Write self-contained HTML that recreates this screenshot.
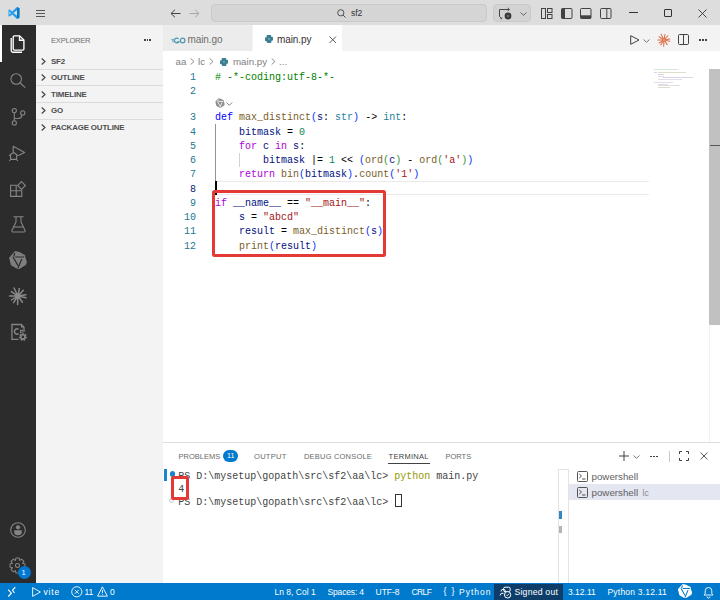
<!DOCTYPE html>
<html><head><meta charset="utf-8">
<style>
*{box-sizing:border-box;margin:0;padding:0}
html,body{width:720px;height:600px;overflow:hidden;background:#fff;font-family:"Liberation Sans",sans-serif}
.a{position:absolute}
.t{position:absolute;white-space:pre;line-height:1}
svg{position:absolute;overflow:visible}
.mono{font-family:"Liberation Mono",monospace}
/* code colours */
.cm{color:#008000}.kw{color:#0000ff}.ct{color:#af00db}.fn{color:#795e26}.pr{color:#001080}
.ty{color:#267f99}.nu{color:#098658}.st{color:#a31515}.op{color:#000}.b1{color:#0431fa}.b2{color:#319331}.b3{color:#7b3814}
</style></head><body>

<!-- TITLE BAR -->
<div class="a" id="titlebar" style="left:0;top:0;width:720px;height:25px;background:#dddddd"></div>
<!-- vscode logo -->
<svg style="left:8px;top:7px" width="12" height="12" viewBox="0 0 100 100">
 <path d="M96 11 L75 1 L35 38 L12 20 L4 23 V77 L12 80 L35 62 L75 99 L96 89 Z M75 28 V72 L45 50 Z M12 35 L25 50 L12 65 Z" fill="#1f9cf0"/>
 <path d="M75 1 L96 11 V89 L75 99 Z" fill="#0065a9" opacity="0.6"/>
</svg>
<!-- hamburger -->
<div class="a" style="left:36px;top:10px;width:9px;height:1.2px;background:#555"></div>
<div class="a" style="left:36px;top:13px;width:9px;height:1.2px;background:#555"></div>
<div class="a" style="left:36px;top:16px;width:9px;height:1.2px;background:#555"></div>
<!-- back / forward -->
<svg style="left:170px;top:9px" width="11" height="9" viewBox="0 0 11 9"><path d="M10.5 4.5H1M5 0.7L1 4.5L5 8.3" fill="none" stroke="#424242" stroke-width="1"/></svg>
<svg style="left:189px;top:9px" width="11" height="9" viewBox="0 0 11 9"><path d="M0.5 4.5H10M6 0.7L10 4.5L6 8.3" fill="none" stroke="#a8a8a8" stroke-width="1"/></svg>
<!-- command center -->
<div class="a" style="left:210.5px;top:4px;width:276px;height:18px;background:#d5d5d5;border:1px solid #c9c9c9;border-radius:4px"></div>
<svg style="left:337px;top:9px" width="9" height="9" viewBox="0 0 9 9"><circle cx="3.8" cy="3.8" r="3.1" fill="none" stroke="#444" stroke-width="0.9"/><path d="M6 6L8.6 8.6" stroke="#444" stroke-width="0.9"/></svg>
<div class="t" style="left:351px;top:9px;font-size:8.5px;color:#333">sf2</div>
<!-- copilot button -->
<div class="a" style="left:493px;top:4px;width:38px;height:18px;background:#d3d3d3;border:1px solid #cacaca;border-radius:4px"></div>
<svg style="left:498px;top:7px" width="15" height="13" viewBox="0 0 15 13">
 <path d="M11.3 2.5 H1.5 V9.3 L3.6 11.6" fill="none" stroke="#454545" stroke-width="1"/>
 <path d="M9.6 1 L11.4 2.5 L9.6 4" fill="none" stroke="#454545" stroke-width="0.9"/>
 <path d="M2.4 11.8 H3.8 V10.4" fill="none" stroke="#454545" stroke-width="0.8"/>
 <circle cx="10" cy="9" r="3.4" fill="#3a3a3a"/>
 <circle cx="10" cy="9" r="1.3" fill="#6a6a6a"/>
</svg>
<svg style="left:519.5px;top:11.5px" width="7" height="4" viewBox="0 0 7 4"><path d="M0.5 0.5L3.5 3.3L6.5 0.5" fill="none" stroke="#555" stroke-width="0.9"/></svg>
<!-- layout icons -->
<svg style="left:541px;top:8px" width="12" height="11" viewBox="0 0 12 11"><rect x="0.5" y="0.5" width="4" height="10" fill="none" stroke="#424242" stroke-width="1"/><rect x="6.5" y="0.5" width="4.5" height="4" fill="none" stroke="#424242" stroke-width="1"/><rect x="6.5" y="6.5" width="4.5" height="4" fill="none" stroke="#424242" stroke-width="1"/></svg>
<svg style="left:561px;top:8px" width="12" height="11" viewBox="0 0 12 11"><rect x="0.5" y="0.5" width="10.5" height="10" rx="1" fill="none" stroke="#424242" stroke-width="1"/><rect x="0.5" y="0.5" width="3.5" height="10" fill="#424242"/></svg>
<svg style="left:580px;top:8px" width="12" height="11" viewBox="0 0 12 11"><rect x="0.5" y="0.5" width="10.5" height="10" rx="1" fill="none" stroke="#424242" stroke-width="1"/><rect x="0.5" y="7.3" width="10.5" height="3.2" fill="#424242"/></svg>
<svg style="left:600px;top:8px" width="12" height="11" viewBox="0 0 12 11"><rect x="0.5" y="0.5" width="10.5" height="10" rx="1" fill="none" stroke="#424242" stroke-width="1"/><path d="M6.8 0.5V10.5" stroke="#424242" stroke-width="1"/></svg>
<!-- window controls -->
<div class="a" style="left:629px;top:12px;width:9px;height:1px;background:#333"></div>
<div class="a" style="left:664px;top:9px;width:8px;height:8px;border:1px solid #333;border-radius:1px"></div>
<svg style="left:698px;top:9px" width="9" height="9" viewBox="0 0 9 9"><path d="M0.5 0.5L8.5 8.5M8.5 0.5L0.5 8.5" stroke="#333" stroke-width="0.9"/></svg>

<!-- ACTIVITY BAR -->
<div class="a" id="activity" style="left:0;top:25px;width:36px;height:558px;background:#2c2c2c"></div>
<div class="a" style="left:0;top:25px;width:2px;height:37px;background:#ffffff"></div>
<!-- explorer -->
<svg style="left:4px;top:30px" width="28" height="28" viewBox="0 0 28 28">
 <path d="M10.3 5.8 H15.6 L19.9 10.1 V19 A1.1 1.1 0 0 1 18.8 20.1 H10.3 A1.1 1.1 0 0 1 9.2 19 V6.9 A1.1 1.1 0 0 1 10.3 5.8 Z" fill="none" stroke="#ffffff" stroke-width="1.35"/>
 <path d="M15.5 5.8 V10.2 H19.9" fill="none" stroke="#ffffff" stroke-width="1.35"/>
 <path d="M7.2 8 V20.5 A1.7 1.7 0 0 0 8.9 22.2 H18" fill="none" stroke="#ffffff" stroke-width="1.35"/>
</svg>
<!-- search -->
<svg style="left:10px;top:73px" width="16" height="15" viewBox="0 0 16 15">
 <circle cx="6.2" cy="6" r="5.3" fill="none" stroke="#858585" stroke-width="1.1"/>
 <path d="M10 9.8 L15.2 14.6" stroke="#858585" stroke-width="1.2"/>
</svg>
<!-- source control -->
<svg style="left:10.5px;top:107px" width="15" height="19" viewBox="0 0 15 19">
 <circle cx="3.3" cy="3.6" r="2.1" fill="none" stroke="#858585" stroke-width="1.1"/>
 <circle cx="3.3" cy="15.9" r="2.1" fill="none" stroke="#858585" stroke-width="1.1"/>
 <circle cx="11.7" cy="5.9" r="2.1" fill="none" stroke="#858585" stroke-width="1.1"/>
 <path d="M3.3 5.7 V13.8" stroke="#858585" stroke-width="1.1"/>
 <path d="M11 7.9 Q10.5 11.2 7.5 11.5 H3.3" fill="none" stroke="#858585" stroke-width="1.1"/>
</svg>
<!-- run and debug -->
<svg style="left:4px;top:140px" width="28" height="28" viewBox="0 0 28 28">
 <path d="M9.2 12.2 V6.2 L20.6 12.4 L14.6 15.4" fill="none" stroke="#858585" stroke-width="1.15" stroke-linejoin="round"/>
 <path d="M9.6 12.5 L12.9 14.8 L12.4 19.4 H6.8 L6.3 14.8 Z" fill="none" stroke="#858585" stroke-width="1.2" stroke-linejoin="round"/>
 <path d="M6.3 15.5 H4.9 M12.9 15.5 H14.3 M6.9 19.4 L5.3 20.8 M12.3 19.4 L13.9 20.8" stroke="#858585" stroke-width="1.1"/>
</svg>
<!-- extensions -->
<svg style="left:10px;top:181px" width="16" height="16" viewBox="0 0 16 16">
 <path d="M0.6 4.2 H6.2 V9.8 H0.6 Z M0.6 9.8 H6.2 V15.4 H0.6 Z M6.2 9.8 H11.8 V15.4 H6.2 Z" fill="none" stroke="#858585" stroke-width="1.1"/>
 <path d="M11.5 0.6 L15.4 4.5 L11.5 8.4 L7.6 4.5 Z" fill="none" stroke="#858585" stroke-width="1.1"/>
</svg>
<!-- testing flask -->
<svg style="left:10.5px;top:216px" width="15" height="17" viewBox="0 0 15 17">
 <path d="M2.5 0.8 H12.5 M5 0.8 V6 L0.9 14.6 A1 1 0 0 0 1.8 16 H13.2 A1 1 0 0 0 14.1 14.6 L10 6 V0.8" fill="none" stroke="#858585" stroke-width="1.1" stroke-linejoin="round"/>
 <path d="M3 11 H12" stroke="#858585" stroke-width="1.1"/>
</svg>
<!-- knot icon -->
<svg style="left:4px;top:246px" width="28" height="28" viewBox="0 0 28 28">
 <path d="M11.2 5.1 L15.4 6.1 L21 8.9 L21.5 11.7 L22.9 15.9 L22 18.7 L15.4 22.9 L12.6 22.4 L7 19.2 L5.1 11.7 L9.3 7 Z" fill="#7e7e7e"/>
 <path d="M11.2 11 H20.1 M8.9 10.7 L14 19.6 M17.8 13.1 L14 22 M10.8 7 L9.8 10.3" stroke="#2c2c2c" stroke-width="1.2" fill="none"/>
</svg>
<!-- sparkle -->
<svg style="left:4px;top:282px" width="28" height="28" viewBox="0 0 28 28">
 <path d="M13.33 12.66 L10.00 6.01 M14.26 12.52 L15.33 6.45 M15.02 12.90 L19.33 8.23 M15.48 13.75 L21.99 12.67 M15.46 14.33 L21.99 15.78 M14.87 15.22 L18.44 20.21 M13.92 15.50 L13.56 22.43 M13.17 15.25 L9.56 20.66 M12.71 14.77 L7.34 18.00 M12.50 14.00 L5.57 14.00 M12.75 13.17 L7.34 9.56" stroke="#8a8a8a" stroke-width="1.45" stroke-linecap="round"/>
 <circle cx="14" cy="14" r="2.6" fill="#8a8a8a"/>
</svg>
<!-- page with gear -->
<svg style="left:4px;top:318px" width="28" height="28" viewBox="0 0 28 28">
 <path d="M14.5 21.4 H7.9 V6.5 H17.3 L20 9.2 V14" fill="none" stroke="#858585" stroke-width="1.3"/>
 <path d="M17 6.5 L20 9.5 H17 Z" fill="#858585"/>
 <path d="M14.6 11.4 A2.6 2.6 0 1 0 14.6 15.6" fill="none" stroke="#858585" stroke-width="1.4"/>
 <path d="M15.8 12.5 H19 M15.8 14.4 H19 M16.6 11.5 V15.4 M18.2 11.5 V15.4" stroke="#858585" stroke-width="0.8"/>
 <path d="M17.64 16.07 L17.94 14.61 L19.86 14.61 L20.16 16.07 L20.32 16.15 L21.66 15.47 L22.86 16.97 L21.90 18.12 L21.94 18.30 L23.30 18.92 L22.87 20.79 L21.38 20.76 L21.27 20.90 L21.63 22.35 L19.90 23.19 L18.99 22.00 L18.81 22.00 L17.90 23.19 L16.17 22.35 L16.53 20.90 L16.42 20.76 L14.93 20.79 L14.50 18.92 L15.86 18.30 L15.90 18.12 L14.94 16.97 L16.14 15.47 L17.48 16.15 Z" fill="#858585" stroke="#2c2c2c" stroke-width="0.6"/>
 <circle cx="18.9" cy="18.9" r="1.3" fill="#2c2c2c"/>
</svg>
<!-- account -->
<svg style="left:10px;top:521.5px" width="16" height="16" viewBox="0 0 16 16">
 <circle cx="8" cy="8" r="7.3" fill="none" stroke="#858585" stroke-width="1.1"/>
 <circle cx="8" cy="5.3" r="2.1" fill="#858585"/>
 <path d="M4.2 8.3 H11.8 V10 A3.8 3.3 0 0 1 4.2 10 Z" fill="#858585"/>
</svg>
<!-- gear -->
<svg style="left:9px;top:557px" width="17" height="17" viewBox="0 0 17 17">
 <path d="M13.74 6.53 L15.92 6.84 L15.92 10.16 L13.74 10.47 L13.60 10.81 L14.92 12.57 L12.57 14.92 L10.81 13.60 L10.47 13.74 L10.16 15.92 L6.84 15.92 L6.53 13.74 L6.19 13.60 L4.43 14.92 L2.08 12.57 L3.40 10.81 L3.26 10.47 L1.08 10.16 L1.08 6.84 L3.26 6.53 L3.40 6.19 L2.08 4.43 L4.43 2.08 L6.19 3.40 L6.53 3.26 L6.84 1.08 L10.16 1.08 L10.47 3.26 L10.81 3.40 L12.57 2.08 L14.92 4.43 L13.60 6.19 Z" fill="none" stroke="#858585" stroke-width="1.05" stroke-linejoin="round"/>
 <circle cx="8.5" cy="8.5" r="2" fill="none" stroke="#858585" stroke-width="1.05"/>
</svg>
<div class="a" style="left:17.5px;top:565.5px;width:13px;height:13px;border-radius:50%;background:#0078d4"></div>
<div class="t" style="left:21.5px;top:568.5px;font-size:7.5px;color:#fff">1</div>

<!-- SIDEBAR -->
<div class="a" id="sidebar" style="left:36px;top:25px;width:127px;height:558px;background:#f3f3f3"></div>
<div class="t" style="left:51px;top:36.5px;font-size:7.6px;color:#6f6f6f;letter-spacing:-0.25px">EXPLORER</div>
<div class="a" style="left:144px;top:39px;width:1.5px;height:1.5px;background:#424242"></div>
<div class="a" style="left:146.5px;top:39px;width:1.5px;height:1.5px;background:#424242"></div>
<div class="a" style="left:149px;top:39px;width:1.5px;height:1.5px;background:#424242"></div>
<div class="a" style="left:36px;top:69px;width:127px;height:1px;background:#dcdcdc"></div>
<div class="a" style="left:36px;top:85px;width:127px;height:1px;background:#dcdcdc"></div>
<div class="a" style="left:36px;top:102px;width:127px;height:1px;background:#dcdcdc"></div>
<div class="a" style="left:36px;top:118.5px;width:127px;height:1px;background:#dcdcdc"></div>
<svg style="left:41px;top:57.5px" width="5" height="7" viewBox="0 0 5 7"><path d="M0.7 0.5L4 3.5L0.7 6.5" fill="none" stroke="#424242" stroke-width="1.15"/></svg>
<div class="t" style="left:51px;top:57.7px;font-size:7.9px;font-weight:bold;color:#4d4d4d;letter-spacing:-0.15px">SF2</div>
<svg style="left:41px;top:74.2px" width="5" height="7" viewBox="0 0 5 7"><path d="M0.7 0.5L4 3.5L0.7 6.5" fill="none" stroke="#424242" stroke-width="1.15"/></svg>
<div class="t" style="left:51px;top:74.4px;font-size:7.9px;font-weight:bold;color:#4d4d4d;letter-spacing:-0.15px">OUTLINE</div>
<svg style="left:41px;top:90.7px" width="5" height="7" viewBox="0 0 5 7"><path d="M0.7 0.5L4 3.5L0.7 6.5" fill="none" stroke="#424242" stroke-width="1.15"/></svg>
<div class="t" style="left:51px;top:90.9px;font-size:7.9px;font-weight:bold;color:#4d4d4d;letter-spacing:-0.15px">TIMELINE</div>
<svg style="left:41px;top:107.2px" width="5" height="7" viewBox="0 0 5 7"><path d="M0.7 0.5L4 3.5L0.7 6.5" fill="none" stroke="#424242" stroke-width="1.15"/></svg>
<div class="t" style="left:51px;top:107.4px;font-size:7.9px;font-weight:bold;color:#4d4d4d;letter-spacing:-0.15px">GO</div>
<svg style="left:41px;top:123.7px" width="5" height="7" viewBox="0 0 5 7"><path d="M0.7 0.5L4 3.5L0.7 6.5" fill="none" stroke="#424242" stroke-width="1.15"/></svg>
<div class="t" style="left:51px;top:123.9px;font-size:7.9px;font-weight:bold;color:#4d4d4d;letter-spacing:-0.15px">PACKAGE OUTLINE</div>

<!-- EDITOR -->
<div class="a" id="tabs" style="left:163px;top:25px;width:557px;height:26px;background:#f3f3f3"></div>
<div class="a" style="left:163px;top:25px;width:90px;height:26px;background:#ececec;border-right:1px solid #f3f3f3"></div>
<div class="a" style="left:253px;top:25px;width:89px;height:26px;background:#ffffff"></div>
<!-- go icon -->
<svg style="left:171px;top:36.5px" width="15" height="7" viewBox="0 0 15 7">
 <path d="M0.2 2.4 H3 M0.8 3.7 H2.8 M1.4 5 H3" stroke="#4f9bb3" stroke-width="0.7"/>
 <path d="M7.6 1.9 A2.4 2.4 0 1 0 7.7 5 H5.8" fill="none" stroke="#4f9bb3" stroke-width="1.3"/>
 <circle cx="11.6" cy="3.5" r="2.3" fill="none" stroke="#4f9bb3" stroke-width="1.3"/>
</svg>
<div class="t" style="left:187.5px;top:35px;font-size:10px;color:#6c6c6c;letter-spacing:-0.1px">main.go</div>
<!-- python icon -->
<svg style="left:264.5px;top:35px" width="8" height="8" viewBox="0 0 8 8">
 <g fill="#3a7f91"><rect x="1.6" y="0" width="4.6" height="3.8" rx="1"/><rect x="0" y="2.2" width="3.8" height="4" rx="1"/><rect x="4.2" y="1.8" width="3.8" height="4" rx="1"/><rect x="1.8" y="4.2" width="4.6" height="3.8" rx="1"/></g><path d="M3.2 3.9 H4.8" stroke="#fff" stroke-width="0.5"/>
</svg>
<div class="t" style="left:277px;top:35px;font-size:10px;color:#333333;letter-spacing:-0.1px">main.py</div>
<svg style="left:328.5px;top:35.8px" width="7.5" height="7.5" viewBox="0 0 8 8"><path d="M0.6 0.6L7.4 7.4M7.4 0.6L0.6 7.4" stroke="#424242" stroke-width="0.9"/></svg>
<!-- editor actions -->
<svg style="left:630px;top:34.5px" width="10" height="10" viewBox="0 0 10 10"><path d="M0.7 0.7 V9.3 L9 5 Z" fill="none" stroke="#424242" stroke-width="1" stroke-linejoin="round"/></svg>
<svg style="left:643px;top:38.5px" width="7" height="4" viewBox="0 0 7 4"><path d="M0.5 0.5L3.5 3.3L6.5 0.5" fill="none" stroke="#6a6a6a" stroke-width="0.9"/></svg>
<svg style="left:657px;top:32.6px" width="14" height="14" viewBox="0 0 14 14">
 <path d="M6.64 6.28 L4.06 1.13 M7.14 6.21 L7.98 1.45 M7.54 6.41 L10.92 2.76 M7.79 6.87 L12.87 6.02 M7.78 7.17 L12.87 8.31 M7.46 7.65 L10.26 11.57 M6.96 7.80 L6.67 13.20 M6.56 7.67 L3.74 11.89 M6.31 7.41 L2.11 9.94 M6.20 7.00 L0.80 7.00 M6.33 6.56 L2.11 3.74" stroke="#dc6f4b" stroke-width="1.05" stroke-linecap="round"/>
 <circle cx="7" cy="7" r="1.5" fill="#e88d6c"/>
</svg>
<svg style="left:678px;top:34px" width="11" height="11" viewBox="0 0 11 11"><rect x="0.5" y="0.5" width="10" height="10" rx="1.2" fill="none" stroke="#424242" stroke-width="1"/><path d="M5.5 0.5V10.5" stroke="#424242" stroke-width="1"/></svg>
<div class="a" style="left:699px;top:39px;width:1.5px;height:1.5px;background:#424242"></div>
<div class="a" style="left:702px;top:39px;width:1.5px;height:1.5px;background:#424242"></div>
<div class="a" style="left:705px;top:39px;width:1.5px;height:1.5px;background:#424242"></div>

<div class="a" id="editor" style="left:163px;top:51px;width:557px;height:391px;background:#ffffff"></div>
<!-- breadcrumbs -->
<div class="t" style="left:175.5px;top:57px;font-size:9.75px;color:#7f7f7f">aa</div>
<svg style="left:190px;top:58px" width="5" height="7" viewBox="0 0 5 7"><path d="M0.7 0.5L4 3.5L0.7 6.5" fill="none" stroke="#7f7f7f" stroke-width="0.9"/></svg>
<div class="t" style="left:198px;top:57px;font-size:9.75px;color:#7f7f7f">lc</div>
<svg style="left:208.5px;top:58px" width="5" height="7" viewBox="0 0 5 7"><path d="M0.7 0.5L4 3.5L0.7 6.5" fill="none" stroke="#7f7f7f" stroke-width="0.9"/></svg>
<svg style="left:220px;top:57.5px" width="8" height="8" viewBox="0 0 8 8">
 <g fill="#3a7f91"><rect x="1.6" y="0" width="4.6" height="3.8" rx="1"/><rect x="0" y="2.2" width="3.8" height="4" rx="1"/><rect x="4.2" y="1.8" width="3.8" height="4" rx="1"/><rect x="1.8" y="4.2" width="4.6" height="3.8" rx="1"/></g><path d="M3.2 3.9 H4.8" stroke="#fff" stroke-width="0.5"/>
</svg>
<div class="t" style="left:233px;top:57px;font-size:9.75px;color:#7f7f7f">main.py</div>
<svg style="left:270.5px;top:58px" width="5" height="7" viewBox="0 0 5 7"><path d="M0.7 0.5L4 3.5L0.7 6.5" fill="none" stroke="#7f7f7f" stroke-width="0.9"/></svg>
<div class="t" style="left:279px;top:57px;font-size:9.75px;color:#7f7f7f">...</div>

<!-- CODE -->
<div class="a" style="left:215px;top:181.15px;width:434px;height:14.25px;border-top:1px solid #eaeaea;border-bottom:1px solid #eaeaea"></div>
<div class="a" style="left:215px;top:124.15px;width:1px;height:57.0px;background:#939393"></div>
<div class="a" style="left:239px;top:152.65px;width:1px;height:14.25px;background:#d3d3d3"></div>
<div class="t mono" style="left:190px;top:70.5px;font-size:10px;line-height:14.25px;color:#237893">1</div>
<div class="t mono" style="left:215px;top:70.5px;font-size:10px;line-height:14.25px;color:#000"><span class="cm"># -*-coding:utf-8-*-</span></div>
<div class="t mono" style="left:190px;top:84.75px;font-size:10px;line-height:14.25px;color:#237893">2</div>
<div class="t mono" style="left:190px;top:111.4px;font-size:10px;line-height:14.25px;color:#237893">3</div>
<div class="t mono" style="left:215px;top:111.4px;font-size:10px;line-height:14.25px;color:#000"><span class="kw">def</span> <span class="fn">max_distinct</span><span class="b1">(</span><span class="pr">s</span>: <span class="ty">str</span><span class="b1">)</span> -&gt; <span class="ty">int</span>:</div>
<div class="t mono" style="left:190px;top:125.65px;font-size:10px;line-height:14.25px;color:#237893">4</div>
<div class="t mono" style="left:215px;top:125.65px;font-size:10px;line-height:14.25px;color:#000">    <span class="pr">bitmask</span> = <span class="nu">0</span></div>
<div class="t mono" style="left:190px;top:139.9px;font-size:10px;line-height:14.25px;color:#237893">5</div>
<div class="t mono" style="left:215px;top:139.9px;font-size:10px;line-height:14.25px;color:#000">    <span class="ct">for</span> <span class="pr">c</span> <span class="ct">in</span> <span class="pr">s</span>:</div>
<div class="t mono" style="left:190px;top:154.15px;font-size:10px;line-height:14.25px;color:#237893">6</div>
<div class="t mono" style="left:215px;top:154.15px;font-size:10px;line-height:14.25px;color:#000">        <span class="pr">bitmask</span> |= <span class="nu">1</span> &lt;&lt; <span class="b1">(</span><span class="fn">ord</span><span class="b2">(</span><span class="pr">c</span><span class="b2">)</span> - <span class="fn">ord</span><span class="b2">(</span><span class="st">'a'</span><span class="b2">)</span><span class="b1">)</span></div>
<div class="t mono" style="left:190px;top:168.4px;font-size:10px;line-height:14.25px;color:#237893">7</div>
<div class="t mono" style="left:215px;top:168.4px;font-size:10px;line-height:14.25px;color:#000">    <span class="ct">return</span> <span class="fn">bin</span><span class="b1">(</span><span class="pr">bitmask</span><span class="b1">)</span>.<span class="fn">count</span><span class="b1">(</span><span class="st">'1'</span><span class="b1">)</span></div>
<div class="t mono" style="left:190px;top:182.65px;font-size:10px;line-height:14.25px;color:#0b216f">8</div>
<div class="t mono" style="left:190px;top:196.9px;font-size:10px;line-height:14.25px;color:#237893">9</div>
<div class="t mono" style="left:215px;top:196.9px;font-size:10px;line-height:14.25px;color:#000"><span class="ct">if</span> <span class="pr">__name__</span> == <span class="st">"__main__"</span>:</div>
<div class="t mono" style="left:184px;top:211.15px;font-size:10px;line-height:14.25px;color:#237893">10</div>
<div class="t mono" style="left:215px;top:211.15px;font-size:10px;line-height:14.25px;color:#000">    <span class="pr">s</span> = <span class="st">"abcd"</span></div>
<div class="t mono" style="left:184px;top:225.4px;font-size:10px;line-height:14.25px;color:#237893">11</div>
<div class="t mono" style="left:215px;top:225.4px;font-size:10px;line-height:14.25px;color:#000">    <span class="pr">result</span> = <span class="fn">max_distinct</span><span class="b1">(</span><span class="pr">s</span><span class="b1">)</span></div>
<div class="t mono" style="left:184px;top:239.65px;font-size:10px;line-height:14.25px;color:#237893">12</div>
<div class="t mono" style="left:215px;top:239.65px;font-size:10px;line-height:14.25px;color:#000">    <span class="fn">print</span><span class="b1">(</span><span class="pr">result</span><span class="b1">)</span></div>
<div class="a" style="left:215px;top:181.15px;width:1.5px;height:14.25px;background:#000"></div>
<svg style="left:214.5px;top:98.3px" width="10" height="10" viewBox="4.5 4.5 19 19">
 <path d="M11.2 5.1 L15.4 6.1 L21 8.9 L21.5 11.7 L22.9 15.9 L22 18.7 L15.4 22.9 L12.6 22.4 L7 19.2 L5.1 11.7 L9.3 7 Z" fill="#8e8e8e"/>
 <path d="M11.2 11 H20.1 M8.9 10.7 L14 19.6 M17.8 13.1 L14 22 M10.8 7 L9.8 10.3" stroke="#ffffff" stroke-width="1.6" fill="none"/>
</svg>
<svg style="left:225.5px;top:101.8px" width="7" height="4" viewBox="0 0 7 4"><path d="M0.4 0.4L3.3 3.3L6.2 0.4" fill="none" stroke="#7a7a7a" stroke-width="0.9"/></svg>
<div class="a" style="left:211.5px;top:189.5px;width:174px;height:67.5px;border:3px solid #e53935;border-radius:2.5px"></div>
<div class="a" style="left:709px;top:69px;width:11px;height:256px;background:#c1c1c1"></div>
<div class="a" style="left:709px;top:325px;width:1px;height:117px;background:#f2f2f2"></div>
<div class="a" style="left:710px;top:144.5px;width:10px;height:1.5px;background:#555"></div>
<div class="a" style="left:654px;top:68.5px;width:24px;height:1px;background:#7fbf7f;opacity:0.35"></div>
<div class="a" style="left:654px;top:72px;width:3px;height:1px;background:#8080ff;opacity:0.35"></div>
<div class="a" style="left:658px;top:72px;width:28px;height:1px;background:#a29a6a;opacity:0.35"></div>
<div class="a" style="left:658px;top:74px;width:6px;height:1px;background:#8a8ab5;opacity:0.35"></div>
<div class="a" style="left:658px;top:75.5px;width:6px;height:1px;background:#c08ad0;opacity:0.35"></div>
<div class="a" style="left:663px;top:77px;width:30px;height:1px;background:#8a8ab5;opacity:0.35"></div>
<div class="a" style="left:658px;top:78.5px;width:24px;height:1px;background:#b09ad0;opacity:0.35"></div>
<div class="a" style="left:654px;top:82px;width:3px;height:1px;background:#c08ad0;opacity:0.35"></div>
<div class="a" style="left:657px;top:82px;width:16px;height:1px;background:#a0a0c0;opacity:0.35"></div>
<div class="a" style="left:658px;top:83.5px;width:10px;height:1px;background:#c09090;opacity:0.35"></div>
<div class="a" style="left:658px;top:85px;width:22px;height:1px;background:#a0a0c0;opacity:0.35"></div>
<div class="a" style="left:658px;top:86.5px;width:12px;height:1px;background:#a29a6a;opacity:0.35"></div>

<!-- PANEL -->
<div class="a" id="panel" style="left:163px;top:441.5px;width:557px;height:141.5px;background:#ffffff;border-top:1px solid #dedede"></div>
<div class="t" style="left:178.5px;top:452.9px;font-size:7.5px;color:#6b6b6b">PROBLEMS</div>
<div class="a" style="left:223px;top:449.5px;width:15px;height:12px;border-radius:6px;background:#007acc"></div>
<div class="t" style="left:227px;top:452.3px;font-size:7.2px;color:#fff">11</div>
<div class="t" style="left:254px;top:452.9px;font-size:7.5px;color:#6b6b6b;letter-spacing:0.3px">OUTPUT</div>
<div class="t" style="left:304px;top:452.9px;font-size:7.5px;color:#6b6b6b;letter-spacing:0.2px">DEBUG CONSOLE</div>
<div class="t" style="left:388.5px;top:452.9px;font-size:7.5px;color:#424242;letter-spacing:0.3px">TERMINAL</div>
<div class="a" style="left:388px;top:463px;width:42px;height:1.2px;background:#424242"></div>
<div class="t" style="left:445.5px;top:452.9px;font-size:7.5px;color:#6b6b6b">PORTS</div>
<!-- panel actions -->
<svg style="left:619px;top:451px" width="10" height="10" viewBox="0 0 10 10"><path d="M5 0V10M0 5H10" stroke="#424242" stroke-width="1"/></svg>
<svg style="left:633px;top:454.5px" width="7" height="4" viewBox="0 0 7 4"><path d="M0.5 0.5L3.5 3.3L6.5 0.5" fill="none" stroke="#6a6a6a" stroke-width="0.9"/></svg>
<div class="a" style="left:650px;top:455.5px;width:1.5px;height:1.5px;background:#424242"></div>
<div class="a" style="left:653px;top:455.5px;width:1.5px;height:1.5px;background:#424242"></div>
<div class="a" style="left:656px;top:455.5px;width:1.5px;height:1.5px;background:#424242"></div>
<div class="a" style="left:668.5px;top:451px;width:1px;height:11px;background:#c8c8c8"></div>
<svg style="left:678.5px;top:451px" width="10" height="10" viewBox="0 0 10 10"><path d="M0.5 3V0.5H3M7 0.5H9.5V3M9.5 7V9.5H7M3 9.5H0.5V7" fill="none" stroke="#424242" stroke-width="1"/></svg>
<svg style="left:699.5px;top:452px" width="8" height="8" viewBox="0 0 8 8"><path d="M0.6 0.6L7.4 7.4M7.4 0.6L0.6 7.4" stroke="#424242" stroke-width="0.9"/></svg>
<!-- terminal -->
<div class="a" style="left:163.5px;top:469px;width:3.5px;height:12px;background:#1a85d0"></div>
<div class="a" style="left:169.6px;top:471.4px;width:5.2px;height:5.2px;border-radius:50%;background:#1a85d0"></div>
<div class="a" style="left:168.8px;top:497.5px;width:5px;height:5px;border-radius:50%;border:0.8px solid #c8c8c8"></div>
<div class="t mono" style="left:178.25px;top:471.3px;font-size:10px;line-height:12.85px;color:#444">PS D:\mysetup\gopath\src\sf2\aa\lc&gt; <span style="color:#949800">python</span> main.py</div>
<div class="t mono" style="left:178.25px;top:484.15px;font-size:10px;line-height:12.85px;color:#444">4</div>
<div class="t mono" style="left:178.25px;top:497px;font-size:10px;line-height:12.85px;color:#444">PS D:\mysetup\gopath\src\sf2\aa\lc&gt; </div>
<div class="a" style="left:394.5px;top:494px;width:7px;height:12.8px;border:1px solid #333"></div>
<div class="a" style="left:171px;top:476.3px;width:18px;height:24px;border:3px solid #e53935;border-radius:2px"></div>
<!-- terminal scrollbar & tabs -->
<div class="a" style="left:558px;top:468.5px;width:11px;height:114.5px;border:1px solid #e3e3e3;border-bottom:none"></div>

<div class="a" style="left:558.5px;top:510.5px;width:3px;height:8px;background:#3089c4"></div>
<div class="a" style="left:558.5px;top:525.5px;width:3px;height:7.5px;background:#b4b4b4"></div>
<div class="a" style="left:569px;top:484.4px;width:151px;height:16px;background:#e4e6f1"></div>
<svg style="left:577px;top:471px" width="11" height="11" viewBox="0 0 11 11"><rect x="0.5" y="0.5" width="10" height="10" rx="1" fill="none" stroke="#424242" stroke-width="0.9"/><path d="M2.3 3L4.5 5L2.3 7M5 8H8.5" fill="none" stroke="#424242" stroke-width="0.9"/></svg>
<div class="t" style="left:591.5px;top:472px;font-size:9.75px;color:#616161">powershell</div>
<svg style="left:577px;top:487px" width="11" height="11" viewBox="0 0 11 11"><rect x="0.5" y="0.5" width="10" height="10" rx="1" fill="none" stroke="#424242" stroke-width="0.9"/><path d="M2.3 3L4.5 5L2.3 7M5 8H8.5" fill="none" stroke="#424242" stroke-width="0.9"/></svg>
<div class="t" style="left:591.5px;top:488px;font-size:9.75px;color:#616161">powershell</div>
<div class="t" style="left:642.5px;top:489px;font-size:8.5px;color:#8a8a8a">lc</div>

<!-- STATUS BAR -->
<div class="a" id="status" style="left:0;top:583px;width:720px;height:17px;background:#007acc"></div>
<svg style="left:0;top:580px" width="20" height="20" viewBox="0 0 20 20"><path d="M8.1 9.6L11.4 13.2L8.3 16.5M15.3 7.2L12.5 10.3L14.5 13" fill="none" stroke="#fff" stroke-width="1.1"/></svg>
<svg style="left:31.5px;top:586.5px" width="9" height="10" viewBox="0 0 9 10"><path d="M0.6 0.6V9.4L8.4 5Z" fill="none" stroke="#fff" stroke-width="0.9" stroke-linejoin="round"/></svg>
<div class="t" style="left:43.5px;top:587.5px;font-size:8.5px;color:#fff;letter-spacing:0.8px">vite</div>
<svg style="left:70.5px;top:586px" width="12" height="12" viewBox="0 0 12 12"><circle cx="5.8" cy="5.8" r="5.1" fill="none" stroke="#fff" stroke-width="0.9"/><path d="M3.8 3.8L7.8 7.8M7.8 3.8L3.8 7.8" stroke="#fff" stroke-width="0.9"/></svg>
<div class="t" style="left:84.5px;top:587.5px;font-size:8.5px;color:#fff">11</div>
<svg style="left:96.5px;top:586px" width="11" height="11" viewBox="0 0 11 11"><path d="M5.4 0.8L10.4 10.2H0.6Z" fill="none" stroke="#fff" stroke-width="0.9" stroke-linejoin="round"/><path d="M5.4 4V7.2M5.4 8.2V9" stroke="#fff" stroke-width="0.9"/></svg>
<div class="t" style="left:110px;top:587.5px;font-size:8.5px;color:#fff">0</div>
<div class="t" style="left:274.5px;top:587.5px;font-size:8.5px;color:#fff">Ln 8, Col 1</div>
<div class="t" style="left:327.5px;top:587.5px;font-size:8.5px;color:#fff;letter-spacing:-0.15px">Spaces: 4</div>
<div class="t" style="left:375.5px;top:587.5px;font-size:8.5px;color:#fff">UTF-8</div>
<div class="t" style="left:411.5px;top:587.5px;font-size:8.5px;color:#fff;letter-spacing:-0.6px">CRLF</div>
<div class="t" style="left:443.5px;top:587px;font-size:9px;color:#fff;letter-spacing:1.2px">{ }</div>
<div class="t" style="left:459px;top:587.5px;font-size:8.5px;color:#fff;letter-spacing:1px">Python</div>
<div class="a" style="left:494px;top:583.5px;width:69px;height:16.5px;background:#0e3d6a"></div>
<svg style="left:499px;top:585.5px" width="14" height="13" viewBox="0 0 14 13">
 <path d="M2 5.5 A2.2 2.2 0 0 1 6.4 5.5 V7 M1 9.5 A2.8 2.8 0 0 1 4.5 7.3" fill="none" stroke="#fff" stroke-width="1"/>
 <rect x="4.6" y="1.2" width="6.6" height="4.5" rx="1.5" fill="none" stroke="#fff" stroke-width="1"/>
 <circle cx="8.6" cy="8.8" r="3.2" fill="#0c3b66" stroke="#fff" stroke-width="1"/>
 <path d="M7 8.6 L8.2 9.8 L10.2 7.6" fill="none" stroke="#fff" stroke-width="0.8"/>
</svg>
<div class="t" style="left:514.5px;top:587.5px;font-size:8.7px;color:#fff;letter-spacing:0.2px">Signed out</div>
<div class="t" style="left:568px;top:587.5px;font-size:8.5px;color:#fff">3.12.11</div>
<div class="t" style="left:607.5px;top:587.5px;font-size:8.5px;color:#fff;letter-spacing:0.2px">Python 3.12.11</div>
<svg style="left:676.5px;top:583px" width="16" height="16" viewBox="4 4 20 20">
 <path d="M11.2 5.1 L15.4 6.1 L21 8.9 L21.5 11.7 L22.9 15.9 L22 18.7 L15.4 22.9 L12.6 22.4 L7 19.2 L5.1 11.7 L9.3 7 Z" fill="#ffffff"/>
 <path d="M11.2 11 H20.1 M8.9 10.7 L14 19.6 M17.8 13.1 L14 22 M10.8 7 L9.8 10.3" stroke="#007acc" stroke-width="1.3" fill="none"/>
</svg>
<svg style="left:703px;top:585.5px" width="11" height="12" viewBox="0 0 11 12"><path d="M1 9 H10 L8.8 7.5 V4.8 A3.3 3.3 0 0 0 2.2 4.8 V7.5 Z M4 10.5 A1.5 1.5 0 0 0 7 10.5" fill="none" stroke="#fff" stroke-width="0.9" stroke-linejoin="round"/></svg>

</body></html>
